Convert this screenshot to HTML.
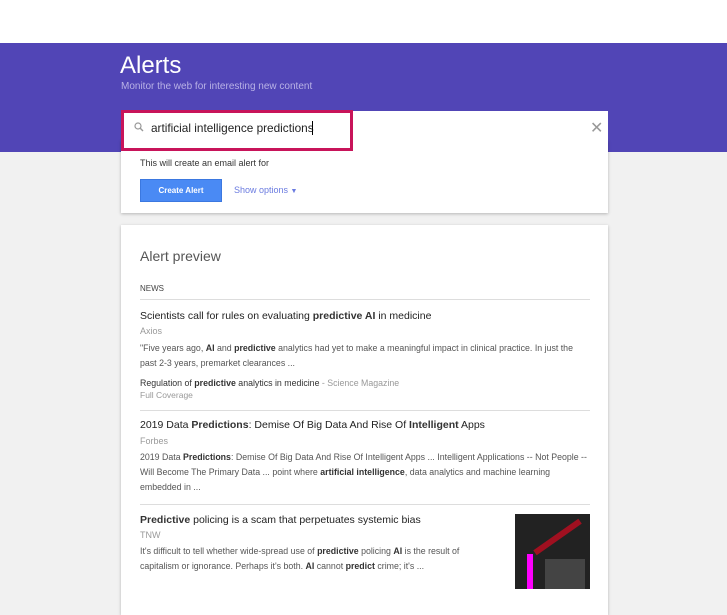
<!DOCTYPE html>
<html><head><style>
*{margin:0;padding:0;box-sizing:border-box}
body{width:727px;height:603px;overflow:hidden;background:#f1f1f1;font-family:"Liberation Sans",Arial,sans-serif;position:relative}
.top{position:absolute;left:0;top:0;width:727px;height:43px;background:#fff}
.band{position:absolute;left:0;top:43px;width:727px;height:109px;background:#5145b6}
.t{position:absolute;left:120px;top:52px;color:#fff;font-size:24px}
.st{position:absolute;left:121px;top:81px;color:#b9b2e6;font-size:10px}
.card{position:absolute;background:#fff;box-shadow:0 1px 3px rgba(0,0,0,.25)}
.search{position:absolute;left:121px;top:111px;width:487px;height:33px;background:#fff}
.pink{position:absolute;left:121px;top:110px;width:232px;height:41px;border:3px solid #c8145a}
.q{position:absolute;left:151px;top:121px;font-size:11.8px;color:#222}
.cur{position:absolute;left:312px;top:121px;width:1px;height:14px;background:#000}
.x{position:absolute;left:590px;top:118px;font-size:16px;color:#999}
.btn{position:absolute;left:140px;top:179px;width:82px;height:23px;background:#4a8af4;border:1px solid #3b78e0;color:#fff;font-size:8px;font-weight:bold;text-align:center;line-height:21px}
.a{position:absolute;font-size:9px;color:#555}
.h{position:absolute;left:140px;font-size:10.5px;color:#222}
.s{position:absolute;left:140px;font-size:9px;color:#999}
.d{position:absolute;left:140px;font-size:8.8px;color:#555;line-height:15px}
b{color:#333}
.hr{position:absolute;left:140px;width:450px;height:1px;background:#ddd}
</style></head><body>
<div class="top"></div>
<div class="band"></div>
<div class="t">Alerts</div>
<div class="st">Monitor the web for interesting new content</div>
<div class="card" style="left:121px;top:140px;width:487px;height:73px"></div>
<div class="search"></div>
<div class="pink"></div>
<svg style="position:absolute;left:134px;top:122px" width="10" height="10" viewBox="0 0 10 10"><circle cx="4" cy="4" r="3" fill="none" stroke="#999" stroke-width="1.2"/><path d="M6 6L9 9" stroke="#999" stroke-width="1.4"/></svg>
<div class="q">artificial intelligence predictions</div>
<div class="cur"></div>
<div class="x">✕</div>
<div class="a" style="left:140px;top:158px;color:#333">This will create an email alert for</div>
<div class="btn">Create Alert</div>
<div class="a" style="left:234px;top:185px;color:#6a7be0">Show options <span style="font-size:7px">▼</span></div>
<div class="card" style="left:121px;top:225px;width:487px;height:390px"></div>
<div style="position:absolute;left:140px;top:248px;font-size:14px;color:#555">Alert preview</div>
<div class="a" style="left:140px;top:284px;font-size:8px;color:#444">NEWS</div>
<div class="hr" style="top:299px"></div>
<div class="h" style="top:310px">Scientists call for rules on evaluating <b>predictive AI</b> in medicine</div>
<div class="s" style="top:326px">Axios</div>
<div class="d" style="top:341px">"Five years ago, <b>AI</b> and <b>predictive</b> analytics had yet to make a meaningful impact in clinical practice. In just the<br>past 2-3 years, premarket clearances ...</div>
<div class="d" style="top:376px;color:#333">Regulation of <b>predictive</b> analytics in medicine <span style="color:#999">- Science Magazine</span></div>
<div class="s" style="top:390px;font-size:8.5px">Full Coverage</div>
<div class="hr" style="top:410px"></div>
<div class="h" style="top:419px">2019 Data <b>Predictions</b>: Demise Of Big Data And Rise Of <b>Intelligent</b> Apps</div>
<div class="s" style="top:436px">Forbes</div>
<div class="d" style="top:450px">2019 Data <b>Predictions</b>: Demise Of Big Data And Rise Of Intelligent Apps ... Intelligent Applications -- Not People --<br>Will Become The Primary Data ... point where <b>artificial intelligence</b>, data analytics and machine learning<br>embedded in ...</div>
<div class="hr" style="top:504px"></div>
<div class="h" style="top:514px"><b>Predictive</b> policing is a scam that perpetuates systemic bias</div>
<div class="s" style="top:530px">TNW</div>
<div class="d" style="top:544px">It's difficult to tell whether wide-spread use of <b>predictive</b> policing <b>AI</b> is the result of<br>capitalism or ignorance. Perhaps it's both. <b>AI</b> cannot <b>predict</b> crime; it's ...</div>
<div style="position:absolute;left:515px;top:514px;width:75px;height:75px;background:#222">
<div style="position:absolute;left:12px;top:40px;width:6px;height:35px;background:#f0f"></div>
<div style="position:absolute;left:15px;top:20px;width:55px;height:6px;background:#a01020;transform:rotate(-35deg)"></div>
<div style="position:absolute;left:30px;top:45px;width:40px;height:30px;background:#444"></div>
</div>
</body></html>
